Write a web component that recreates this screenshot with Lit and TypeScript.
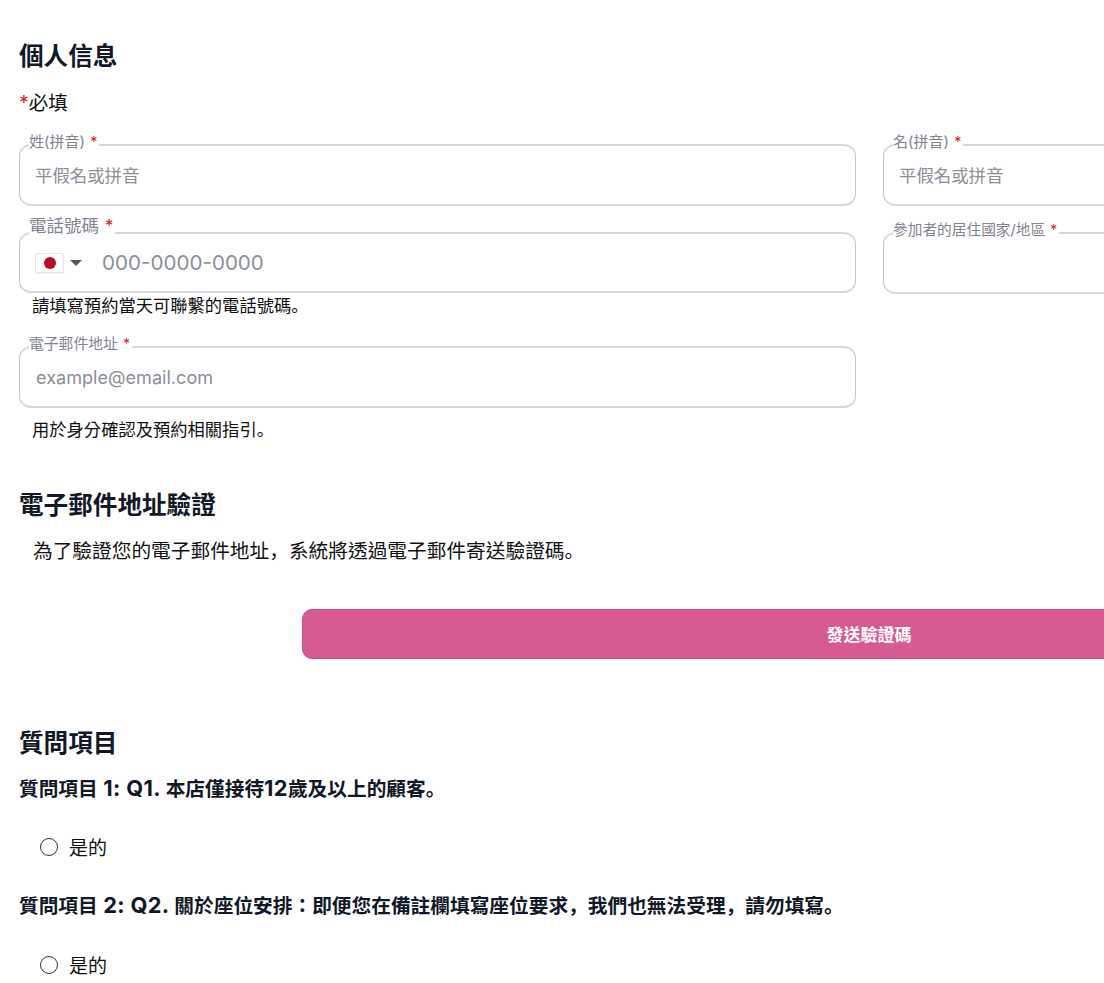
import { LitElement, html, css } from "lit";
import { customElement } from "lit/decorators.js";

@customElement("app-root")
export class AppRoot extends LitElement {
  static styles = css`
    :host {
      display: block;
      width: 1104px;
      height: 983px;
      overflow: hidden;
      background: #fff;
      font-family: Inter, "Noto Sans CJK TC", sans-serif;
      color: #111;
    }
    .page { width: 1701px; padding: 40px 0 0 19px; }
    h2 { margin: 0; font-size: 24.6px; line-height: 32px; font-weight: 700; color: #111827; }
    .req { margin-top: 17px; font-size: 19.5px; line-height: 28px; }
    .star { color: #d9202b; }
    .p { font-family: "Noto Sans CJK SC", sans-serif; line-height: 0; }
    .grid { display: grid; grid-template-columns: 837px 837px; column-gap: 27px; }
    .r1 { margin-top: 27px; }
    .r2 { margin-top: 26px; }
    .r3 { margin-top: 28px; }
    .field {
      position: relative;
      box-sizing: border-box;
      display: flex;
      align-items: center;
      height: 62px;
      border-style: solid;
      border-width: 2px 1px;
      border-color: #d6d7da #c4c6cb;
      border-radius: 12px;
      padding-left: 16px;
      background: #fff;
    }
    .field.tel-field { height: 61px; padding-left: 15px; }
    .label {
      position: absolute;
      left: 9px;
      background: #fff;
      padding-right: 2px;
      white-space: nowrap;
      color: #7f848e;
      line-height: 18px;
    }
    .label .star { margin-left: 1px; font-size: 0.95em; }
    .l-a { top: -13px; font-size: 15px; }
    .l-b { top: -17px; font-size: 17.5px; }
    .l-c { top: -13px; font-size: 14.7px; }
    .l-d { top: -13px; font-size: 14.8px; }
    input {
      flex: 1;
      min-width: 0;
      border: none;
      outline: none;
      background: transparent;
      padding: 0;
      font: inherit;
      font-size: 17.4px;
      color: #111;
    }
    input::placeholder { color: #8b8f98; opacity: 1; }
    input.name { margin-left: -1px; }
    input.tel { font-size: 20.6px; margin-left: 20px; }
    input.mail { font-size: 18.1px; }
    .flag {
      box-sizing: border-box;
      display: flex;
      align-items: center;
      justify-content: center;
      width: 29px;
      height: 20px;
      background: #fff;
      border: 1px solid #e6e6e8;
      border-radius: 2px;
      box-shadow: 0 1px 1px rgba(0,0,0,.06);
    }
    .flag i { width: 12px; height: 12px; border-radius: 50%; background: #bc0a2c; }
    .caret {
      width: 0; height: 0;
      margin-left: 6px;
      border-left: 6px solid transparent;
      border-right: 6px solid transparent;
      border-top: 6px solid #555a60;
    }
    .help { font-size: 17.3px; line-height: 24px; padding-left: 13px; color: #111; white-space: nowrap; }
    .h1 { margin-top: 1px; }
    .h2 { margin-top: 10px; }
    .mt47 { margin-top: 47px; }
    .mt68 { margin-top: 68px; }
    .intro { margin-top: 16px; padding-left: 14px; font-size: 19.7px; line-height: 28px; white-space: nowrap; }
    .btn {
      display: block;
      box-sizing: border-box;
      margin: 44px 0 0 283px;
      width: 1134px;
      height: 50px;
      padding: 0 0 2px;
      border: 1px solid #c54f85;
      border-radius: 10px;
      background: #d85a93;
      color: #fff;
      font: inherit;
      font-size: 17px;
      font-weight: 600;
    }
    .q { font-size: 19.7px; line-height: 28px; font-weight: 700; color: #111827; white-space: nowrap; }
    .q .lat { font-size: 21.8px; letter-spacing: 0.35px; line-height: 0; }
    .q1 { margin-top: 16px; }
    .q2 { margin-top: 31px; }
    .opt { display: flex; align-items: center; gap: 11px; padding-left: 21px; font-size: 19px; line-height: 28px; height: 28px; }
    .opt b { font-weight: 400; line-height: 25px; padding-top: 3px; }
    .o1 { margin-top: 30px; }
    .o2 { margin-top: 31px; }
    .radio { box-sizing: border-box; width: 18px; height: 18px; border: 1.5px solid #333; border-radius: 50%; background: #fff; }
  `;

  private star() {
    return html`<span class="star">*</span>`;
  }

  render() {
    return html`
      <div class="page">
        <h2>個人信息</h2>
        <div class="req">${this.star()}必填</div>

        <div class="grid r1">
          <div class="field">
            <span class="label l-a">姓(拼音) ${this.star()}</span>
            <input class="name" placeholder="平假名或拼音" />
          </div>
          <div class="field">
            <span class="label l-a">名(拼音) ${this.star()}</span>
            <input class="name" placeholder="平假名或拼音" />
          </div>
        </div>

        <div class="grid r2">
          <div>
            <div class="field tel-field">
              <span class="label l-b">電話號碼 ${this.star()}</span>
              <span class="flag"><i></i></span>
              <span class="caret"></span>
              <input class="tel" placeholder="000-0000-0000" />
            </div>
            <div class="help h1">請填寫預約當天可聯繫的電話號碼<span class="p">。</span></div>
          </div>
          <div>
            <div class="field">
              <span class="label l-c">參加者的居住國家/地區 ${this.star()}</span>
            </div>
          </div>
        </div>

        <div class="grid r3">
          <div>
            <div class="field">
              <span class="label l-d">電子郵件地址 ${this.star()}</span>
              <input class="mail" placeholder="example@email.com" />
            </div>
            <div class="help h2">用於身分確認及預約相關指引<span class="p">。</span></div>
          </div>
        </div>

        <h2 class="mt47">電子郵件地址驗證</h2>
        <div class="intro">為了驗證您的電子郵件地址<span class="p">，</span>系統將透過電子郵件寄送驗證碼<span class="p">。</span></div>
        <button class="btn">發送驗證碼</button>

        <h2 class="mt68">質問項目</h2>
        <div class="q q1">質問項目<span class="lat"> 1: Q1. </span>本店僅接待<span class="lat">12</span>歲及以上的顧客<span class="p">。</span></div>
        <div class="opt o1"><span class="radio"></span><b>是的</b></div>
        <div class="q q2">質問項目<span class="lat"> 2: Q2. </span>關於座位安排：即便您在備註欄填寫座位要求<span class="p">，</span>我們也無法受理<span class="p">，</span>請勿填寫<span class="p">。</span></div>
        <div class="opt o2"><span class="radio"></span><b>是的</b></div>
      </div>
    `;
  }
}
